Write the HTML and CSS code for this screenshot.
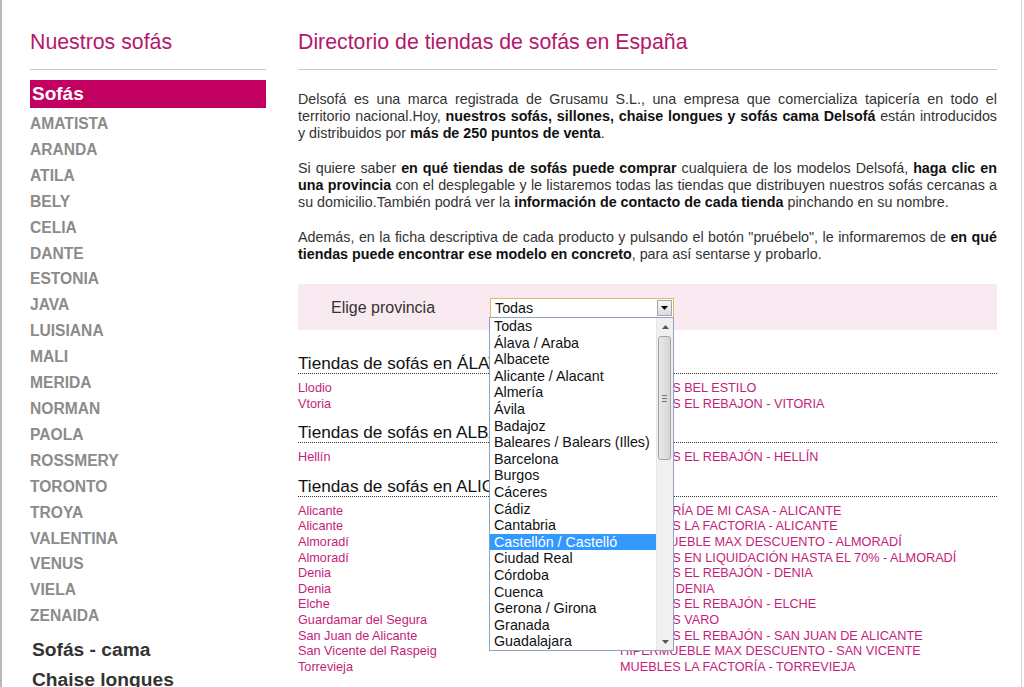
FILE: index.html
```html
<!DOCTYPE html>
<html lang="es">
<head>
    <meta charset="UTF-8">
    <meta name="viewport" content="width=device-width, initial-scale=1.0">
    <title>Directorio de tiendas de sofás en España</title>
    <link rel="stylesheet" href="styles.css">
</head>
<body>
    <div class="window">
        <aside class="sidebar">
            <h2 class="side-title">Nuestros sofás</h2>
            <h3 class="cat-active">Sofás</h3>
            <ul class="models">
                <li>AMATISTA</li>
                <li>ARANDA</li>
                <li>ATILA</li>
                <li>BELY</li>
                <li>CELIA</li>
                <li>DANTE</li>
                <li>ESTONIA</li>
                <li>JAVA</li>
                <li>LUISIANA</li>
                <li>MALI</li>
                <li>MERIDA</li>
                <li>NORMAN</li>
                <li>PAOLA</li>
                <li>ROSSMERY</li>
                <li>TORONTO</li>
                <li>TROYA</li>
                <li>VALENTINA</li>
                <li>VENUS</li>
                <li>VIELA</li>
                <li>ZENAIDA</li>
            </ul>
            <h3 class="cat">Sofás - cama</h3>
            <h3 class="cat">Chaise longues</h3>
        </aside>

        <main class="main">
            <h1 class="main-title">Directorio de tiendas de sofás en España</h1>

            <p>Delsofá es una marca registrada de Grusamu S.L., una empresa que comercializa tapicería en todo el territorio nacional.Hoy, <b>nuestros sofás, sillones, chaise longues y sofás cama Delsofá</b> están introducidos y distribuidos por <b>más de 250 puntos de venta</b>.</p>

            <p>Si quiere saber <b>en qué tiendas de sofás puede comprar</b> cualquiera de los modelos Delsofá, <b>haga clic en una provincia</b> con el desplegable y le listaremos todas las tiendas que distribuyen nuestros sofás cercanas a su domicilio.También podrá ver la <b>información de contacto de cada tienda</b> pinchando en su nombre.</p>

            <p>Además, en la ficha descriptiva de cada producto y pulsando el botón "pruébelo", le informaremos de <b>en qué tiendas puede encontrar ese modelo en concreto</b>, para así sentarse y probarlo.</p>

            <div class="filtro">
                <label class="filtro-label">Elige provincia</label>
                <div class="select">
                    <div class="select-box">
                        <span>Todas</span>
                        <span class="select-btn">
                            <svg width="7" height="4" viewBox="0 0 7 4"><path d="M0 0h7L3.5 4z" fill="#000"/></svg>
                        </span>
                    </div>
                    <div class="dropdown">
                        <ul class="opciones">
                            <li>Todas</li>
                            <li>Álava / Araba</li>
                            <li>Albacete</li>
                            <li>Alicante / Alacant</li>
                            <li>Almería</li>
                            <li>Ávila</li>
                            <li>Badajoz</li>
                            <li>Baleares / Balears (Illes)</li>
                            <li>Barcelona</li>
                            <li>Burgos</li>
                            <li>Cáceres</li>
                            <li>Cádiz</li>
                            <li>Cantabria</li>
                            <li class="sel">Castellón / Castelló</li>
                            <li>Ciudad Real</li>
                            <li>Córdoba</li>
                            <li>Cuenca</li>
                            <li>Gerona / Girona</li>
                            <li>Granada</li>
                            <li>Guadalajara</li>
                        </ul>
                        <div class="scrollbar">
                            <span class="sb-arrow">
                                <svg width="7" height="4" viewBox="0 0 7 4"><path d="M0 4h7L3.5 0z" fill="#555"/></svg>
                            </span>
                            <span class="sb-thumb"><span class="grip"></span></span>
                            <span class="sb-arrow sb-down">
                                <svg width="7" height="4" viewBox="0 0 7 4"><path d="M0 0h7L3.5 4z" fill="#555"/></svg>
                            </span>
                        </div>
                    </div>
                </div>
            </div>

            <section class="provincia">
                <h2>Tiendas de sofás en ÁLAVA</h2>
                <div class="tiendas">
                    <a href="#">Llodio</a><a href="#">MUEBLES BEL ESTILO</a>
                    <a href="#">Vtoria</a><a href="#">MUEBLES EL REBAJON - VITORIA</a>
                </div>
            </section>

            <section class="provincia">
                <h2>Tiendas de sofás en ALBACETE</h2>
                <div class="tiendas">
                    <a href="#">Hellín</a><a href="#">MUEBLES EL REBAJÓN - HELLÍN</a>
                </div>
            </section>

            <section class="provincia">
                <h2>Tiendas de sofás en ALICANTE</h2>
                <div class="tiendas">
                    <a href="#">Alicante</a><a href="#">MUEBLERÍA DE MI CASA - ALICANTE</a>
                    <a href="#">Alicante</a><a href="#">MUEBLES LA FACTORIA - ALICANTE</a>
                    <a href="#">Almoradí</a><a href="#">HIPERMUEBLE MAX DESCUENTO - ALMORADÍ</a>
                    <a href="#">Almoradí</a><a href="#">MUEBLES EN LIQUIDACIÓN HASTA EL 70% - ALMORADÍ</a>
                    <a href="#">Denia</a><a href="#">MUEBLES EL REBAJÓN - DENIA</a>
                    <a href="#">Denia</a><a href="#">SOFALIA DENIA</a>
                    <a href="#">Elche</a><a href="#">MUEBLES EL REBAJÓN - ELCHE</a>
                    <a href="#">Guardamar del Segura</a><a href="#">MUEBLES VARO</a>
                    <a href="#">San Juan de Alicante</a><a href="#">MUEBLES EL REBAJÓN - SAN JUAN DE ALICANTE</a>
                    <a href="#">San Vicente del Raspeig</a><a href="#">HIPERMUEBLE MAX DESCUENTO - SAN VICENTE</a>
                    <a href="#">Torrevieja</a><a href="#">MUEBLES LA FACTORÍA - TORREVIEJA</a>
                </div>
            </section>
        </main>
    </div>
</body>
</html>
```

FILE: styles.css
```css
html {
    overflow: hidden;
}
body {
    margin: 0;
    padding: 0;
    background-color: #ffffff;
    font-family: "Liberation Sans", Arial, sans-serif;
    color: #333333;
}
.window {
    display: flex;
    width: 1022px;
    height: 687px;
    box-sizing: border-box;
    padding: 30px 0 0 28px;
    border-left: 2px solid #b9b9b9;
    border-right: 1px solid #d4d4d4;
    overflow: hidden;
}

/* columna izquierda */
.sidebar {
    width: 236px;
    flex-shrink: 0;
    margin-right: 32px;
}
.side-title, .main-title {
    margin: 0;
    font-size: 21.3px;
    line-height: 24px;
    font-weight: normal;
    color: #b3186c;
    padding-bottom: 15px;
    border-bottom: 1px solid #c8c8c8;
}
.cat-active {
    margin: 10px 0 0;
    height: 28px;
    line-height: 28px;
    padding-left: 2px;
    background-color: #c2005f;
    color: #ffffff;
    font-size: 19px;
    font-weight: bold;
}
.models {
    list-style: none;
    margin: 3px 0 0;
    padding: 0;
}
.models li {
    font-size: 15.6px;
    font-weight: bold;
    line-height: 25.9px;
    color: #8b8b8b;
}
.cat {
    margin: 0;
    padding-left: 2px;
    font-size: 19.2px;
    line-height: 30px;
    font-weight: bold;
    color: #333333;
}
.models + .cat {
    margin-top: 6px;
}

/* columna principal */
.main {
    width: 699px;
    flex-shrink: 0;
}
.main p {
    margin: 0 0 18px;
    font-size: 14.3px;
    line-height: 17px;
    text-align: justify;
}
.main-title + p {
    margin-top: 21px;
}
.main p b {
    color: #111111;
}

.filtro {
    position: relative;
    display: flex;
    height: 46px;
    box-sizing: border-box;
    padding: 14px 0 0 33px;
    margin-top: 21px;
    background-color: #f9e9f0;
}
.filtro-label {
    width: 159px;
    font-size: 16px;
    line-height: 20px;
    color: #333333;
}
.select {
    position: relative;
    width: 184px;
    z-index: 2;
}
.select-box {
    display: flex;
    justify-content: space-between;
    align-items: center;
    height: 20px;
    box-sizing: border-box;
    padding: 0 1px 0 4px;
    border: 1px solid #e0b570;
    background-color: #ffffff;
    font-size: 14.3px;
    color: #111111;
}
.select-btn {
    display: flex;
    align-items: center;
    justify-content: center;
    width: 15px;
    height: 16px;
    box-sizing: border-box;
    border: 1px solid #a5a5a5;
    background: linear-gradient(#f7f7f7, #dadada);
}
.dropdown {
    position: absolute;
    top: 19px;
    left: -1px;
    width: 185px;
    height: 334px;
    box-sizing: border-box;
    border: 1px solid #8fa3bd;
    background-color: #ffffff;
}
.opciones {
    list-style: none;
    margin: 0 17px 0 0;
    padding: 0;
}
.opciones li {
    height: 16.6px;
    line-height: 16.6px;
    padding-left: 4px;
    font-size: 14.3px;
    color: #111111;
    white-space: nowrap;
}
.opciones li.sel {
    background-color: #3399ff;
    color: #ffffff;
}
.scrollbar {
    position: absolute;
    top: 0;
    right: 0;
    bottom: 0;
    width: 17px;
    background-color: #f0f0f0;
    border-left: 1px solid #e6e6e6;
    box-sizing: border-box;
}
.sb-arrow {
    display: flex;
    align-items: center;
    justify-content: center;
    height: 17px;
}
.sb-down {
    position: absolute;
    left: 0;
    right: 0;
    bottom: 0;
}
.sb-thumb {
    position: absolute;
    top: 18px;
    left: 1px;
    width: 13px;
    height: 124px;
    box-sizing: border-box;
    border: 1px solid #a3a3a3;
    border-radius: 3px;
    background: linear-gradient(90deg, #e8e8e8, #d6d6d6);
}
.grip {
    position: absolute;
    top: 58px;
    left: 3px;
    width: 5px;
    height: 5px;
    border-top: 1px solid #777777;
    border-bottom: 1px solid #777777;
}
.grip::after {
    content: "";
    position: absolute;
    top: 2px;
    left: 0;
    width: 5px;
    border-top: 1px solid #777777;
}

.provincia {
    margin-top: 10px;
}
.filtro + .provincia {
    margin-top: 23px;
}
.provincia h2 {
    margin: 0;
    font-size: 17.2px;
    line-height: 20px;
    font-weight: normal;
    color: #111111;
    border-bottom: 1px dotted #333333;
}
.tiendas {
    display: grid;
    grid-template-columns: 322px 1fr;
    margin-top: 7px;
}
.tiendas a {
    font-size: 12.7px;
    line-height: 15.6px;
    color: #c41d7b;
    text-decoration: none;
    white-space: nowrap;
}
```
